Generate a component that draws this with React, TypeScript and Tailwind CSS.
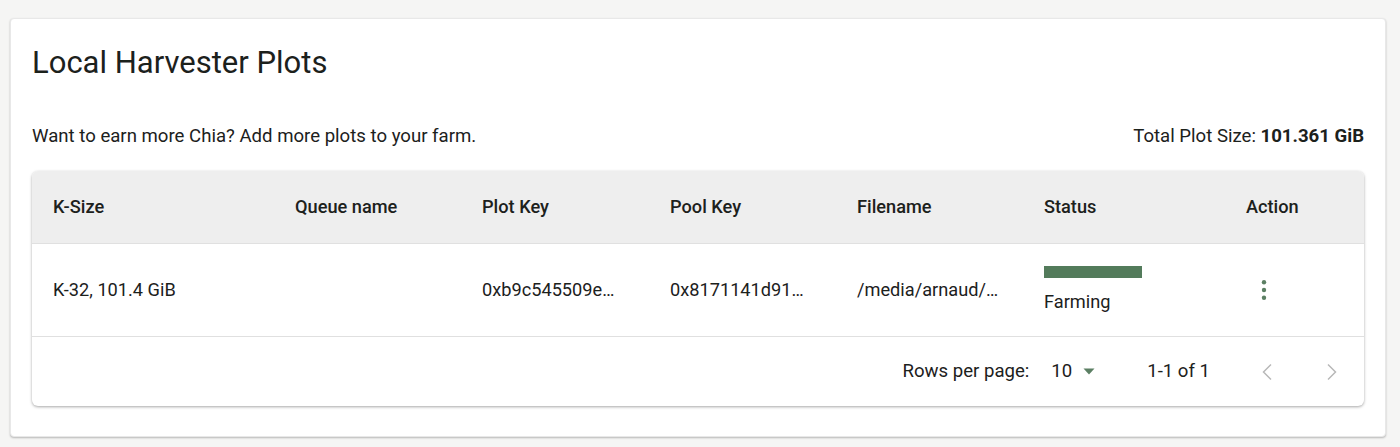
import React from "react";

const cols = "grid grid-cols-[242px_187px_188px_187px_187px_202px_1fr]";

export default function App() {
  return (
    <div
      className="w-[1400px] h-[447px] bg-[#f5f5f4] pt-[18px] pl-[10px] pr-[14px] text-[#1c211c]"
      style={{ fontFamily: "Roboto, 'Noto Sans', sans-serif" }}
    >
      <div className="h-[419px] bg-white rounded-[4px] border border-[#e8e8e8] shadow-[0_1px_2px_rgba(0,0,0,0.25)] px-[21px] pt-[26px]">
        <h1 className="text-[31px] leading-[36px] font-normal">Local Harvester Plots</h1>
        <div className="mt-[44px] flex items-center justify-between text-[18.6px] leading-[22px]">
          <span>Want to earn more Chia? Add more plots to your farm.</span>
          <span>
            Total Plot Size: <span className="font-bold">101.361 GiB</span>
          </span>
        </div>
        <div className="mt-[24px] rounded-[6px] bg-white shadow-[0_1px_3px_rgba(0,0,0,0.35)] overflow-hidden">
          <div className={`${cols} h-[73px] items-center bg-[#eeeeee] border-b border-[#e0e0e0] text-[18.2px] font-medium`}>
            <div className="pl-[21px]">K-Size</div>
            <div className="pl-[21px]">Queue name</div>
            <div className="pl-[21px]">Plot Key</div>
            <div className="pl-[21px]">Pool Key</div>
            <div className="pl-[21px]">Filename</div>
            <div className="pl-[21px]">Status</div>
            <div className="pl-[21px]">Action</div>
          </div>
          <div className={`${cols} h-[93px] items-center border-b border-[#e0e0e0] text-[18.2px]`}>
            <div className="pl-[21px]">K-32, 101.4 GiB</div>
            <div className="pl-[21px]"></div>
            <div className="pl-[21px]">0xb9c545509e…</div>
            <div className="pl-[21px]">0x8171141d91…</div>
            <div className="pl-[21px]">/media/arnaud/…</div>
            <div className="pl-[21px] flex flex-col">
              <div className="w-[98px] h-[12px] bg-[#537b5b]"></div>
              <div className="mt-[12px] leading-[24px]">Farming</div>
            </div>
            <div className="pl-[21px]">
              <div className="w-[36px] flex justify-center">
                <svg width="6" height="22" viewBox="0 0 6 22">
                  <circle cx="3" cy="3.3" r="2.2" fill="#5b7f63" />
                  <circle cx="3" cy="11" r="2.2" fill="#5b7f63" />
                  <circle cx="3" cy="18.7" r="2.2" fill="#5b7f63" />
                </svg>
              </div>
            </div>
          </div>
          <div className="h-[69px] flex items-center justify-end text-[18.6px] pr-[26px]">
            <span>Rows per page:</span>
            <span className="ml-[22px]">10</span>
            <svg className="ml-[11px]" width="12" height="7" viewBox="0 0 12 7">
              <path d="M0.5 0.5 L11.5 0.5 L6 6.5 Z" fill="#5b7f63" />
            </svg>
            <span className="ml-[52px]">1-1 of 1</span>
            <div className="ml-[51px] flex items-center gap-[53px]">
              <svg width="12" height="18" viewBox="0 0 12 18" fill="none" stroke="#b8b8b8" strokeWidth="1.5">
                <path d="M10 1.5 L2.5 9 L10 16.5" />
              </svg>
              <svg width="12" height="18" viewBox="0 0 12 18" fill="none" stroke="#b8b8b8" strokeWidth="1.5">
                <path d="M2 1.5 L9.5 9 L2 16.5" />
              </svg>
            </div>
          </div>
        </div>
      </div>
    </div>
  );
}
